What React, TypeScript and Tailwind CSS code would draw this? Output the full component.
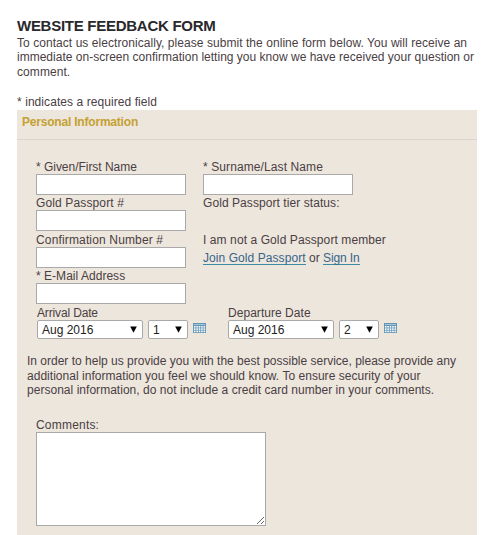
import React from "react";

const line = "block whitespace-nowrap";

function Label({ children, className = "" }: { children: React.ReactNode; className?: string }) {
  return <div className={`h-[15px] whitespace-nowrap leading-[17px] ${className}`}>{children}</div>;
}

function Field({ label, className = "" }: { label: string; className?: string }) {
  return (
    <label className="block h-[36.3px] w-[150px]">
      <Label className={className}>{label}</Label>
      <input className="block h-[21px] w-[150px] border border-[#a9a9a9] bg-white px-1 outline-none" />
    </label>
  );
}

function Select({ value, className }: { value: string; className: string }) {
  return (
    <button
      className={`flex h-[19px] items-center justify-between rounded-[2px] border border-[#a9a9a9] bg-white pr-[5px] pl-1 text-[#222] ${className}`}
    >
      <span className="pt-px">{value}</span>
      <svg width="7" height="7" viewBox="0 0 7 7">
        <path d="M0.2 0.5H6.8L3.5 6.7Z" fill="#000" />
      </svg>
    </button>
  );
}

function CalendarIcon() {
  return (
    <svg width="13" height="10" viewBox="0 0 13 10" className="mt-[3px] ml-[5px]">
      <rect width="13" height="10" fill="#6295b5" />
      <rect x="1" y="1" width="11" height="1" fill="#a9c6d7" />
      {[3, 5.3, 7.6].map((y) =>
        [0.9, 3.3, 5.7, 8.1, 10.5].map((x) => (
          <rect key={`${x}-${y}`} x={x} y={y} width="1.6" height="1.6" fill="#fafcfd" />
        )),
      )}
    </svg>
  );
}

function DatePicker({ label, day, className }: { label: string; day: string; className: string }) {
  return (
    <div className="w-[191px]">
      <Label className={className}>{label}</Label>
      <div className="flex items-start">
        <Select value="Aug 2016" className="w-[106px]" />
        <Select value={day} className="ml-[5px] w-10" />
        <CalendarIcon />
      </div>
    </div>
  );
}

export default function App() {
  return (
    <main className="h-[535px] w-[500px] overflow-hidden bg-white pt-[17px] pl-[17px] font-['Liberation_Sans',Arial,sans-serif] text-[12px] leading-[14.67px] text-[#4a4043]">
      <h1 className="h-[18.6px] text-[15px] leading-[17px] font-bold tracking-[-0.27px] whitespace-nowrap text-[#29282b]">
        WEBSITE FEEDBACK FORM
      </h1>
      <p>
        <span className={`${line} tracking-[0.055px]`}>To contact us electronically, please submit the online form below. You will receive an</span>
        <span className={`${line} tracking-[0.01px]`}>immediate on-screen confirmation letting you know we have received your question or</span>
        <span className={`${line} tracking-[0.07px]`}>comment.</span>
      </p>
      <p className={`${line} mt-[15.2px] tracking-[0.07px]`}>* indicates a required field</p>
      <section className="mt-[0.5px] h-[426px] w-[460px] bg-[#ede6dd]">
        <h2 className="h-[30px] border-b border-[#dbd3cd] pt-[5px] pl-[5px] font-bold tracking-[-0.2px] text-[#c4a132]">
          Personal Information
        </h2>
        <div className="flex pt-[19px] pl-[19px]">
          <div className="w-[167px]">
            <Field label="* Given/First Name" className="tracking-[-0.03px]" />
            <Field label="Gold Passport #" className="tracking-[0.13px]" />
            <Field label="Confirmation Number #" className="tracking-[0.15px]" />
            <Field label="* E-Mail Address" className="tracking-[0.03px]" />
          </div>
          <div>
            <Field label="* Surname/Last Name" className="tracking-[0.1px]" />
            <Label className="tracking-[0.07px]">Gold Passport tier status:</Label>
            <Label className="mt-[21.3px] tracking-[0.09px]">I am not a Gold Passport member</Label>
            <p className="mt-[4px] whitespace-nowrap">
              <a className="inline-block h-[14px] border-b border-[#3d8aa5] leading-[14px] tracking-[0.07px] text-[#36648b]">Join Gold Passport</a>
              {" or "}
              <a className="inline-block h-[14px] border-b border-[#3d8aa5] leading-[14px] tracking-[-0.1px] text-[#36648b]">Sign In</a>
            </p>
          </div>
        </div>
        <div className="flex pt-[0.8px] pl-5">
          <DatePicker label="Arrival Date" day="1" className="tracking-[-0.15px]" />
          <DatePicker label="Departure Date" day="2" className="tracking-[0.04px]" />
        </div>
        <p className="mt-[15px] pl-[10px]">
          <span className={`${line} tracking-[0px]`}>In order to help us provide you with the best possible service, please provide any</span>
          <span className={`${line} tracking-[0.03px]`}>additional information you feel we should know. To ensure security of your</span>
          <span className={`${line} tracking-[0.03px]`}>personal information, do not include a credit card number in your comments.</span>
        </p>
        <label className="mt-[19px] block pl-[19px]">
          <Label className="tracking-[0.2px]">Comments:</Label>
          <textarea className="block h-[94px] w-[230px] resize border border-[#a9a9a9] bg-white outline-none" />
        </label>
      </section>
    </main>
  );
}
